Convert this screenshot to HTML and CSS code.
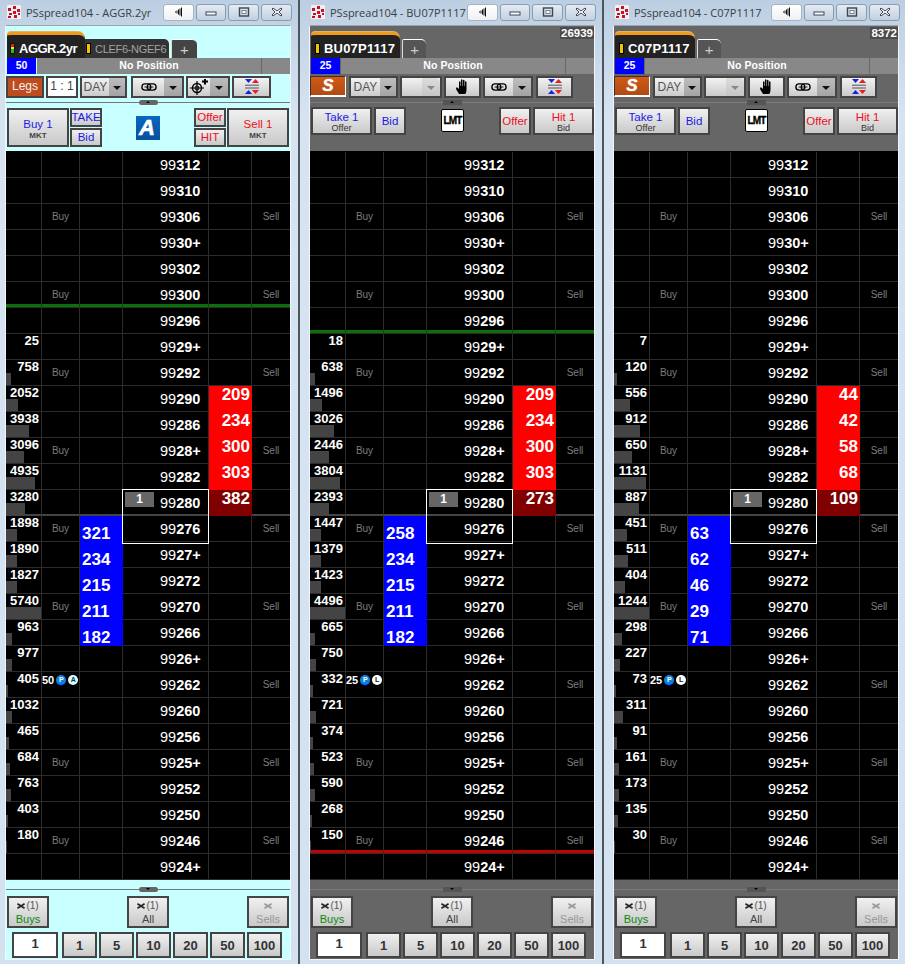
FILE: index.html
```html
<!DOCTYPE html>
<html lang="en">
<head>
<meta charset="utf-8">
<title>PSspread104 ladders</title>
<link rel="stylesheet" href="styles.css">
</head>
<body>
<svg class="defs" aria-hidden="true">
<symbol id="app" viewBox="0 0 14 14"><rect width="14" height="14" fill="#f4eeee"/><path fill="#c4122e" d="M1 3h3v3H1zM6 1h3v3H6zM10 4h3v3h-3zM2 8h3v2H2zM6 6h3v3H6zM1 11h3v2H1zM7 10h3v3H7zM11 8h2v2h-2z"/></symbol>
<symbol id="back" viewBox="0 0 10 10"><path d="M1 4.500h1v1H1zM2.500 3.500h1v3h-1zM4 2.500h1v5H4zM5.500 1.500h1v7h-1zM7 .500h1v9H7z" fill="#111"/></symbol>
<symbol id="min" viewBox="0 0 12 10"><rect x="1" y="5" width="10" height="3" fill="#fff" stroke="#3c4450"/></symbol>
<symbol id="max" viewBox="0 0 12 10"><rect x="1.500" y="1" width="9" height="8" fill="none" stroke="#3c4450" stroke-width="1.400"/><rect x="4" y="3.500" width="4" height="3" fill="#fff" stroke="#3c4450" stroke-width=".6"/></symbol>
<symbol id="close" viewBox="0 0 12 10"><path d="M2 1l4 3 4-3 1 1-3 3 3 3-1 1-4-3-4 3-1-1 3-3-3-3z" fill="#fff" stroke="#3c4450" stroke-width="1"/></symbol>
<symbol id="link" viewBox="0 0 18 9"><rect x="1" y="1" width="10" height="7" rx="3.500" fill="none" stroke="#000" stroke-width="1.500"/><rect x="7" y="1" width="10" height="7" rx="3.500" fill="none" stroke="#000" stroke-width="1.500"/><path d="M4 4.500h10" stroke="#000"/></symbol>
<symbol id="aim" viewBox="0 0 18 16"><circle cx="7" cy="9" r="4.500" fill="none" stroke="#000" stroke-width="1.400"/><circle cx="7" cy="9" r="2" fill="none" stroke="#000"/><path d="M7 2v14M0 9h14" stroke="#000" stroke-width="1.200"/><path d="M12 2.500h6M15 0v5.500" stroke="#000" stroke-width="2"/></symbol>
<symbol id="flat" viewBox="0 0 16 16"><path d="M1 0h7L4.500 4zM1 15l3.500-4L8 15z" fill="#1a22d8"/><path d="M8 4l3.500-4L15 4zM8 11h7l-3.500 4z" fill="#ea1c24"/><path d="M1 6.200h14M1 9h14" stroke="#555" stroke-width="1"/></symbol>
<symbol id="hand" viewBox="0 0 14 16"><path d="M3 15c-1-2-3-4-3-6 1-1 2 0 3 1V3c0-1 1.500-1 1.500 0v4h.5V1c0-1 1.500-1 1.500 0v6h.5V1.500c0-1 1.500-1 1.500 0V7h.5V3c0-1 1.500-1 1.500 0v8c0 2-1 3-1 4z" fill="#000"/></symbol>
<symbol id="x" viewBox="0 0 9 6"><path d="M.5.500l8 5M.5 5.500l8-5" stroke="currentColor" stroke-width="1.800" fill="none"/></symbol>
</svg>
<main class="desk">

<section class="win">
<header class="cap"><svg class="appi"><use href="#app"/></svg><span class="ttl">PSspread104 - AGGR.2yr</span><span class="cbtn back"><svg class="g"><use href="#back"/></svg></span><span class="cbtn w29"><svg class="g"><use href="#min"/></svg></span><span class="cbtn w30"><svg class="g"><use href="#max"/></svg></span><span class="cbtn w31"><svg class="g"><use href="#close"/></svg></span></header>
<div class="panel cy">
<div class="tabs"><div class="tab on tight"><span class="lamp"></span>AGGR.2yr</div><div class="tab off"><span class="bar"></span>CLEF6-NGEF6</div><div class="tab plus">+</div></div>
<div class="status"><span class="qty">50</span><span class="pos">No Position</span><span class="posr"></span></div>
<div class="tools">
<span class="tool legs">Legs</span><span class="tool ratio">1 : 1</span>
<span class="tool w47"><span class="lbl">DAY</span><span class="drop"></span></span>
<span class="tool w53 ml2"><span class="lbl"><svg class="ic18"><use href="#link"/></svg></span><span class="drop d18"></span></span>
<span class="tool w44"><span class="lbl"><svg class="ic16"><use href="#aim"/></svg></span><span class="drop d18"></span></span>
<span class="tool w39"><span class="lbl"><svg class="icf"><use href="#flat"/></svg></span></span>
</div>
<div class="split"><span class="grip"></span></div>
<div class="orders o1">
<div class="grp"><span class="btn big"><span class="bl">Buy 1</span><small>MKT</small></span><span class="stack"><span class="btn sm bl">TAKE</span><span class="btn sm bl">Bid</span></span></div>
<span class="alogo">A</span>
<div class="grp"><span class="stack"><span class="btn sm rd">Offer</span><span class="btn sm rd">HIT</span></span><span class="btn big"><span class="rd">Sell 1</span><small>MKT</small></span></div>
</div>
<div class="ladder">
<div class="r"><i></i><i></i><i></i><i class="p">99<b>312</b></i><i></i><i></i></div>
<div class="r"><i></i><i></i><i></i><i class="p">99<b>310</b></i><i></i><i></i></div>
<div class="r"><i></i><i class="a">Buy</i><i></i><i class="p">99<b>306</b></i><i></i><i class="a">Sell</i></div>
<div class="r"><i></i><i></i><i></i><i class="p">99<b>30+</b></i><i></i><i></i></div>
<div class="r"><i></i><i></i><i></i><i class="p">99<b>302</b></i><i></i><i></i></div>
<div class="r gl"><i></i><i class="a">Buy</i><i></i><i class="p">99<b>300</b></i><i></i><i class="a">Sell</i></div>
<div class="r"><i></i><i></i><i></i><i class="p">99<b>296</b></i><i></i><i></i></div>
<div class="r"><i class="v">25</i><i></i><i></i><i class="p">99<b>29+</b></i><i></i><i></i></div>
<div class="r"><i class="v"><em style="width:5px"></em>758</i><i class="a">Buy</i><i></i><i class="p">99<b>292</b></i><i></i><i class="a">Sell</i></div>
<div class="r"><i class="v"><em style="width:12px"></em>2052</i><i></i><i></i><i class="p">99<b>290</b></i><i class="k">209</i><i></i></div>
<div class="r"><i class="v"><em style="width:23px"></em>3938</i><i></i><i></i><i class="p">99<b>286</b></i><i class="k">234</i><i></i></div>
<div class="r"><i class="v"><em style="width:18px"></em>3096</i><i class="a">Buy</i><i></i><i class="p">99<b>28+</b></i><i class="k">300</i><i class="a">Sell</i></div>
<div class="r"><i class="v"><em style="width:29px"></em>4935</i><i></i><i></i><i class="p">99<b>282</b></i><i class="k">303</i><i></i></div>
<div class="r in"><i class="v"><em style="width:19px"></em>3280</i><i></i><i></i><i class="p sel"><span class="chip">1</span>99<b>280</b></i><i class="k dk">382</i><i></i></div>
<div class="r"><i class="v"><em style="width:11px"></em>1898</i><i class="a">Buy</i><i class="n">321</i><i class="p">99<b>276</b></i><i></i><i class="a">Sell</i></div>
<div class="r"><i class="v"><em style="width:11px"></em>1890</i><i></i><i class="n">234</i><i class="p">99<b>27+</b></i><i></i><i></i></div>
<div class="r"><i class="v"><em style="width:11px"></em>1827</i><i></i><i class="n">215</i><i class="p">99<b>272</b></i><i></i><i></i></div>
<div class="r"><i class="v"><em style="width:35px"></em>5740</i><i class="a">Buy</i><i class="n">211</i><i class="p">99<b>270</b></i><i></i><i class="a">Sell</i></div>
<div class="r"><i class="v"><em style="width:6px"></em>963</i><i></i><i class="n">182</i><i class="p">99<b>266</b></i><i></i><i></i></div>
<div class="r"><i class="v"><em style="width:6px"></em>977</i><i></i><i></i><i class="p">99<b>26+</b></i><i></i><i></i></div>
<div class="r"><i class="v"><em style="width:2px"></em>405</i><i class="wk">50<span class="dot pp">P</span><span class="dot aa">A</span></i><i></i><i class="p">99<b>262</b></i><i></i><i class="a">Sell</i></div>
<div class="r"><i class="v"><em style="width:6px"></em>1032</i><i></i><i></i><i class="p">99<b>260</b></i><i></i><i></i></div>
<div class="r"><i class="v"><em style="width:3px"></em>465</i><i></i><i></i><i class="p">99<b>256</b></i><i></i><i></i></div>
<div class="r"><i class="v"><em style="width:4px"></em>684</i><i class="a">Buy</i><i></i><i class="p">99<b>25+</b></i><i></i><i class="a">Sell</i></div>
<div class="r"><i class="v"><em style="width:5px"></em>763</i><i></i><i></i><i class="p">99<b>252</b></i><i></i><i></i></div>
<div class="r"><i class="v"><em style="width:2px"></em>403</i><i></i><i></i><i class="p">99<b>250</b></i><i></i><i></i></div>
<div class="r"><i class="v"><em style="width:1px"></em>180</i><i class="a">Buy</i><i></i><i class="p">99<b>246</b></i><i></i><i class="a">Sell</i></div>
<div class="r"><i></i><i></i><i></i><i class="p">99<b>24+</b></i><i></i><i></i></div>
</div>
<div class="split low"><span class="grip dn"></span></div>
<div class="cancels"><span class="btn cx"><span class="cxt"><svg class="xi"><use href="#x"/></svg>(1)</span><span class="gr">Buys</span></span><span class="btn cx"><span class="cxt"><svg class="xi"><use href="#x"/></svg>(1)</span><span>All</span></span><span class="btn cx dis"><span class="cxt"><svg class="xi"><use href="#x"/></svg></span><span>Sells</span></span></div>
<div class="qtys"><span class="inp">1</span><span class="btn q">1</span><span class="btn q">5</span><span class="btn q">10</span><span class="btn q">20</span><span class="btn q">50</span><span class="btn q">100</span></div>
</div>
</section>

<section class="win">
<header class="cap"><svg class="appi"><use href="#app"/></svg><span class="ttl">PSspread104 - BU07P1117</span><span class="cbtn back"><svg class="g"><use href="#back"/></svg></span><span class="cbtn w29"><svg class="g"><use href="#min"/></svg></span><span class="cbtn w30"><svg class="g"><use href="#max"/></svg></span><span class="cbtn w31"><svg class="g"><use href="#close"/></svg></span></header>
<div class="panel gy">
<div class="tabs"><div class="tab on"><span class="bar"></span>BU07P1117</div><div class="tab plus pl2">+</div><span class="count">26939</span></div>
<div class="status"><span class="qty">25</span><span class="pos">No Position</span><span class="posr"></span></div>
<div class="tools t2">
<span class="tool sbadge">S</span>
<span class="tool w49 ml1"><span class="lbl">DAY</span><span class="drop"></span></span>
<span class="tool w42"><span class="lbl"></span><span class="drop off d18"></span></span>
<span class="tool w37"><span class="lbl"><svg class="ic14"><use href="#hand"/></svg></span></span>
<span class="tool w50"><span class="lbl"><svg class="ic18"><use href="#link"/></svg></span><span class="drop d18"></span></span>
<span class="tool w37 ml1"><span class="lbl"><svg class="icf"><use href="#flat"/></svg></span></span>
</div>
<div class="split dim"><span class="grip"></span></div>
<div class="orders o2">
<div class="grp g2"><span class="btn tk"><span class="bl">Take 1</span><small class="sub">Offer</small></span><span class="btn bo bl">Bid</span></div>
<span class="lmt">LMT</span>
<div class="grp g2"><span class="btn bo rd">Offer</span><span class="btn tk"><span class="rd">Hit 1</span><small class="sub">Bid</small></span></div>
</div>
<div class="ladder">
<div class="r"><i></i><i></i><i></i><i class="p">99<b>312</b></i><i></i><i></i></div>
<div class="r"><i></i><i></i><i></i><i class="p">99<b>310</b></i><i></i><i></i></div>
<div class="r"><i></i><i class="a">Buy</i><i></i><i class="p">99<b>306</b></i><i></i><i class="a">Sell</i></div>
<div class="r"><i></i><i></i><i></i><i class="p">99<b>30+</b></i><i></i><i></i></div>
<div class="r"><i></i><i></i><i></i><i class="p">99<b>302</b></i><i></i><i></i></div>
<div class="r"><i></i><i class="a">Buy</i><i></i><i class="p">99<b>300</b></i><i></i><i class="a">Sell</i></div>
<div class="r gl"><i></i><i></i><i></i><i class="p">99<b>296</b></i><i></i><i></i></div>
<div class="r"><i class="v">18</i><i></i><i></i><i class="p">99<b>29+</b></i><i></i><i></i></div>
<div class="r"><i class="v"><em style="width:5px"></em>638</i><i class="a">Buy</i><i></i><i class="p">99<b>292</b></i><i></i><i class="a">Sell</i></div>
<div class="r"><i class="v"><em style="width:12px"></em>1496</i><i></i><i></i><i class="p">99<b>290</b></i><i class="k">209</i><i></i></div>
<div class="r"><i class="v"><em style="width:24px"></em>3026</i><i></i><i></i><i class="p">99<b>286</b></i><i class="k">234</i><i></i></div>
<div class="r"><i class="v"><em style="width:19px"></em>2446</i><i class="a">Buy</i><i></i><i class="p">99<b>28+</b></i><i class="k">300</i><i class="a">Sell</i></div>
<div class="r"><i class="v"><em style="width:30px"></em>3804</i><i></i><i></i><i class="p">99<b>282</b></i><i class="k">303</i><i></i></div>
<div class="r in"><i class="v"><em style="width:19px"></em>2393</i><i></i><i></i><i class="p sel"><span class="chip">1</span>99<b>280</b></i><i class="k dk">273</i><i></i></div>
<div class="r"><i class="v"><em style="width:11px"></em>1447</i><i class="a">Buy</i><i class="n">258</i><i class="p">99<b>276</b></i><i></i><i class="a">Sell</i></div>
<div class="r"><i class="v"><em style="width:11px"></em>1379</i><i></i><i class="n">234</i><i class="p">99<b>27+</b></i><i></i><i></i></div>
<div class="r"><i class="v"><em style="width:11px"></em>1423</i><i></i><i class="n">215</i><i class="p">99<b>272</b></i><i></i><i></i></div>
<div class="r"><i class="v"><em style="width:35px"></em>4496</i><i class="a">Buy</i><i class="n">211</i><i class="p">99<b>270</b></i><i></i><i class="a">Sell</i></div>
<div class="r"><i class="v"><em style="width:5px"></em>665</i><i></i><i class="n">182</i><i class="p">99<b>266</b></i><i></i><i></i></div>
<div class="r"><i class="v"><em style="width:6px"></em>750</i><i></i><i></i><i class="p">99<b>26+</b></i><i></i><i></i></div>
<div class="r"><i class="v"><em style="width:3px"></em>332</i><i class="wk">25<span class="dot pp">P</span><span class="dot ll">L</span></i><i></i><i class="p">99<b>262</b></i><i></i><i class="a">Sell</i></div>
<div class="r"><i class="v"><em style="width:6px"></em>721</i><i></i><i></i><i class="p">99<b>260</b></i><i></i><i></i></div>
<div class="r"><i class="v"><em style="width:3px"></em>374</i><i></i><i></i><i class="p">99<b>256</b></i><i></i><i></i></div>
<div class="r"><i class="v"><em style="width:4px"></em>523</i><i class="a">Buy</i><i></i><i class="p">99<b>25+</b></i><i></i><i class="a">Sell</i></div>
<div class="r"><i class="v"><em style="width:5px"></em>590</i><i></i><i></i><i class="p">99<b>252</b></i><i></i><i></i></div>
<div class="r"><i class="v"><em style="width:2px"></em>268</i><i></i><i></i><i class="p">99<b>250</b></i><i></i><i></i></div>
<div class="r rl"><i class="v"><em style="width:1px"></em>150</i><i class="a">Buy</i><i></i><i class="p">99<b>246</b></i><i></i><i class="a">Sell</i></div>
<div class="r"><i></i><i></i><i></i><i class="p">99<b>24+</b></i><i></i><i></i></div>
</div>
<div class="split low dim"><span class="grip dn"></span></div>
<div class="cancels"><span class="btn cx"><span class="cxt"><svg class="xi"><use href="#x"/></svg>(1)</span><span class="gr">Buys</span></span><span class="btn cx"><span class="cxt"><svg class="xi"><use href="#x"/></svg>(1)</span><span>All</span></span><span class="btn cx dis"><span class="cxt"><svg class="xi"><use href="#x"/></svg></span><span>Sells</span></span></div>
<div class="qtys"><span class="inp">1</span><span class="btn q">1</span><span class="btn q">5</span><span class="btn q">10</span><span class="btn q">20</span><span class="btn q">50</span><span class="btn q">100</span></div>
</div>
</section>

<section class="win">
<header class="cap"><svg class="appi"><use href="#app"/></svg><span class="ttl">PSspread104 - C07P1117</span><span class="cbtn back"><svg class="g"><use href="#back"/></svg></span><span class="cbtn w29"><svg class="g"><use href="#min"/></svg></span><span class="cbtn w30"><svg class="g"><use href="#max"/></svg></span><span class="cbtn w31"><svg class="g"><use href="#close"/></svg></span></header>
<div class="panel gy">
<div class="tabs"><div class="tab on"><span class="bar"></span>C07P1117</div><div class="tab plus pl2">+</div><span class="count">8372</span></div>
<div class="status"><span class="qty">25</span><span class="pos">No Position</span><span class="posr"></span></div>
<div class="tools t2">
<span class="tool sbadge">S</span>
<span class="tool w49 ml1"><span class="lbl">DAY</span><span class="drop"></span></span>
<span class="tool w42"><span class="lbl"></span><span class="drop off d18"></span></span>
<span class="tool w37"><span class="lbl"><svg class="ic14"><use href="#hand"/></svg></span></span>
<span class="tool w50"><span class="lbl"><svg class="ic18"><use href="#link"/></svg></span><span class="drop d18"></span></span>
<span class="tool w37 ml1"><span class="lbl"><svg class="icf"><use href="#flat"/></svg></span></span>
</div>
<div class="split dim"><span class="grip"></span></div>
<div class="orders o2">
<div class="grp g2"><span class="btn tk"><span class="bl">Take 1</span><small class="sub">Offer</small></span><span class="btn bo bl">Bid</span></div>
<span class="lmt">LMT</span>
<div class="grp g2"><span class="btn bo rd">Offer</span><span class="btn tk"><span class="rd">Hit 1</span><small class="sub">Bid</small></span></div>
</div>
<div class="ladder">
<div class="r"><i></i><i></i><i></i><i class="p">99<b>312</b></i><i></i><i></i></div>
<div class="r"><i></i><i></i><i></i><i class="p">99<b>310</b></i><i></i><i></i></div>
<div class="r"><i></i><i class="a">Buy</i><i></i><i class="p">99<b>306</b></i><i></i><i class="a">Sell</i></div>
<div class="r"><i></i><i></i><i></i><i class="p">99<b>30+</b></i><i></i><i></i></div>
<div class="r"><i></i><i></i><i></i><i class="p">99<b>302</b></i><i></i><i></i></div>
<div class="r"><i></i><i class="a">Buy</i><i></i><i class="p">99<b>300</b></i><i></i><i class="a">Sell</i></div>
<div class="r"><i></i><i></i><i></i><i class="p">99<b>296</b></i><i></i><i></i></div>
<div class="r"><i class="v">7</i><i></i><i></i><i class="p">99<b>29+</b></i><i></i><i></i></div>
<div class="r"><i class="v"><em style="width:3px"></em>120</i><i class="a">Buy</i><i></i><i class="p">99<b>292</b></i><i></i><i class="a">Sell</i></div>
<div class="r"><i class="v"><em style="width:16px"></em>556</i><i></i><i></i><i class="p">99<b>290</b></i><i class="k">44</i><i></i></div>
<div class="r"><i class="v"><em style="width:26px"></em>912</i><i></i><i></i><i class="p">99<b>286</b></i><i class="k">42</i><i></i></div>
<div class="r"><i class="v"><em style="width:18px"></em>650</i><i class="a">Buy</i><i></i><i class="p">99<b>28+</b></i><i class="k">58</i><i class="a">Sell</i></div>
<div class="r"><i class="v"><em style="width:32px"></em>1131</i><i></i><i></i><i class="p">99<b>282</b></i><i class="k">68</i><i></i></div>
<div class="r in"><i class="v"><em style="width:25px"></em>887</i><i></i><i></i><i class="p sel"><span class="chip">1</span>99<b>280</b></i><i class="k dk">109</i><i></i></div>
<div class="r"><i class="v"><em style="width:13px"></em>451</i><i class="a">Buy</i><i class="n">63</i><i class="p">99<b>276</b></i><i></i><i class="a">Sell</i></div>
<div class="r"><i class="v"><em style="width:14px"></em>511</i><i></i><i class="n">62</i><i class="p">99<b>27+</b></i><i></i><i></i></div>
<div class="r"><i class="v"><em style="width:11px"></em>404</i><i></i><i class="n">46</i><i class="p">99<b>272</b></i><i></i><i></i></div>
<div class="r"><i class="v"><em style="width:35px"></em>1244</i><i class="a">Buy</i><i class="n">29</i><i class="p">99<b>270</b></i><i></i><i class="a">Sell</i></div>
<div class="r"><i class="v"><em style="width:8px"></em>298</i><i></i><i class="n">71</i><i class="p">99<b>266</b></i><i></i><i></i></div>
<div class="r"><i class="v"><em style="width:6px"></em>227</i><i></i><i></i><i class="p">99<b>26+</b></i><i></i><i></i></div>
<div class="r"><i class="v"><em style="width:2px"></em>73</i><i class="wk">25<span class="dot pp">P</span><span class="dot ll">L</span></i><i></i><i class="p">99<b>262</b></i><i></i><i class="a">Sell</i></div>
<div class="r"><i class="v"><em style="width:9px"></em>311</i><i></i><i></i><i class="p">99<b>260</b></i><i></i><i></i></div>
<div class="r"><i class="v"><em style="width:3px"></em>91</i><i></i><i></i><i class="p">99<b>256</b></i><i></i><i></i></div>
<div class="r"><i class="v"><em style="width:5px"></em>161</i><i class="a">Buy</i><i></i><i class="p">99<b>25+</b></i><i></i><i class="a">Sell</i></div>
<div class="r"><i class="v"><em style="width:5px"></em>173</i><i></i><i></i><i class="p">99<b>252</b></i><i></i><i></i></div>
<div class="r"><i class="v"><em style="width:4px"></em>135</i><i></i><i></i><i class="p">99<b>250</b></i><i></i><i></i></div>
<div class="r"><i class="v"><em style="width:1px"></em>30</i><i class="a">Buy</i><i></i><i class="p">99<b>246</b></i><i></i><i class="a">Sell</i></div>
<div class="r"><i></i><i></i><i></i><i class="p">99<b>24+</b></i><i></i><i></i></div>
</div>
<div class="split low dim"><span class="grip dn"></span></div>
<div class="cancels"><span class="btn cx"><span class="cxt"><svg class="xi"><use href="#x"/></svg>(1)</span><span class="gr">Buys</span></span><span class="btn cx"><span class="cxt"><svg class="xi"><use href="#x"/></svg>(1)</span><span>All</span></span><span class="btn cx dis"><span class="cxt"><svg class="xi"><use href="#x"/></svg></span><span>Sells</span></span></div>
<div class="qtys"><span class="inp">1</span><span class="btn q">1</span><span class="btn q">5</span><span class="btn q">10</span><span class="btn q">20</span><span class="btn q">50</span><span class="btn q">100</span></div>
</div>
</section>

</main>
</body>
</html>
```
FILE: styles.css
```css
* { box-sizing: border-box; }
html, body { margin: 0; padding: 0; overflow: hidden; background: #4f555c; }
body { width: 905px; height: 964px; font-family: "Liberation Sans", Arial, sans-serif; font-size: 12px; }
.defs { position: absolute; width: 0; height: 0; }

.desk { display: flex; gap: 2px; margin-left: -4px; width: 910px; height: 964px; }
.win { flex: 0 0 302px; min-width: 0; width: 302px; height: 964px; padding: 0 7px 0 9px; background: linear-gradient(#bccfe2, #d6e4f2 12%, #d3e2f1); }

.cap { display: flex; align-items: center; height: 25px; gap: 2px; padding-bottom: 1px; margin-right: -1px; }
.appi { width: 14px; height: 14px; margin: 0 3px 0 2px; flex: none; }
.ttl { flex: 1; min-width: 0; font-family: "Open Sans", "Noto Sans", sans-serif; font-size: 11px; color: #3a3d41; white-space: nowrap; }
.cbtn { flex: none; height: 17px; display: flex; align-items: center; justify-content: center; border: 1px solid #8c9cb0; border-radius: 3px; background: linear-gradient(#e3ebf4, #c2d0e0); }
.back { width: 31px; background: linear-gradient(#fff, #eef1f5); border-color: #aab4c0; }
.w29 { width: 30px; }
.w30 { width: 31px; }
.w31 { width: 31px; }
.g { width: 12px; height: 10px; }

.panel { height: 935px; border: 1px solid #f2f6fa; border-top-color: #9aa4ae; }
.cy { background: #c8ffff; }
.gy { background: #666; }

.tabs { position: relative; display: flex; align-items: flex-end; height: 32px; padding-left: 1px; }
.tab { display: flex; flex: none; align-items: center; font-weight: bold; white-space: nowrap; }
.on { height: 26px; padding: 4px 5px 0 4px; background: #222; color: #fff; font-size: 13px; letter-spacing: .2px; border-top: 3px solid #f09a20; border-radius: 4px 7px 0 0; box-shadow: 0 -1px 0 #e8b060; }
.tight { width: 78px; padding-left: 3px; letter-spacing: -.5px; }
.off { height: 19px; width: 84px; padding-left: 1px; font-weight: normal; font-size: 11px; letter-spacing: -.3px; color: #a4a4a4; background: #333; border-radius: 0 5px 0 0; }
.plus { justify-content: center; width: 26px; height: 19px; margin-left: 2px; font-weight: normal; font-size: 15px; color: #ccc; background: #444; border-top: 1px solid #fff; border-left: 1px solid #ddd; border-radius: 2px 5px 0 0; }
.pl2 { width: 24px; background: #555; }
.lamp { flex: none; width: 5px; height: 11px; margin-right: 4px; background: linear-gradient(#d22 30%, #ee2 30%, #ee2 60%, #2b2 60%); border: 1px solid #111; }
.bar { flex: none; width: 5px; height: 11px; margin-right: 4px; background: #f5c400; border: 1px solid #000; }
.count { position: absolute; top: 1px; right: 0; padding: 0 1px; background: #4c4c4c; color: #fff; font-weight: bold; font-size: 11.500px; line-height: 12px; }

.status { display: flex; height: 16px; padding-left: 1px; color: #fff; font-weight: bold; font-size: 10.500px; line-height: 15px; }
.qty { width: 29px; background: #00f; text-align: center; margin-right: 1px; }
.pos { flex: 1; background: #888; text-align: center; letter-spacing: .1px; }
.posr { width: 29px; background: #888; border-left: 1px solid #666; }

.tools { display: flex; gap: 2px; margin-top: 2px; height: 22px; }
.tool { display: flex; flex: none; height: 22px; border: 2px solid #444; background: linear-gradient(#f2f2f2, #cbcbcb); color: #555; overflow: hidden; line-height: 17px; }
.lbl { flex: 1; display: flex; align-items: center; justify-content: center; font-size: 12px; }
.drop { position: relative; flex: none; width: 16px; background: linear-gradient(#bdbdbd, #a4a4a4); }
.d18 { width: 18px; }
.drop::after { content: ""; position: absolute; left: 50%; top: 8px; margin-left: -4px; border: 4px solid transparent; border-top: 4px solid #111; border-bottom: 0; }
.drop.off { background: linear-gradient(#ddd, #c4c4c4); }
.drop.off::after { border-top-color: #888; }
.legs { width: 38px; background: #bf4c1c; color: #f2f2f2; justify-content: center; font-size: 12px; }
.ratio { width: 32px; background: #fff; color: #444; justify-content: center; font-size: 12px; border-color: #444; }
.sbadge { width: 36px; height: 21px; background: linear-gradient(#d25a14, #b04a14); color: #fff; justify-content: center; font: italic bold 17px/18px "Liberation Sans", sans-serif; border: 1px solid #333; border-bottom: 2px solid #fff; border-right: 1px solid #fff; text-shadow: 0 0 1px #fff; }
.w37 { width: 37px; }
.w39 { width: 39px; }
.w42 { width: 42px; }
.w44 { width: 44px; }
.w47 { width: 47px; }
.w49 { width: 49px; }
.w50 { width: 50px; }
.w53 { width: 53px; }
.ml1 { margin-left: 1px; }
.ml2 { margin-left: 2px; }
.ic18 { width: 16px; height: 8px; }
.ic16 { width: 18px; height: 16px; }
.ic14 { width: 14px; height: 16px; }
.icf { width: 16px; height: 16px; }

.split { position: relative; height: 9px; display: flex; justify-content: center; }
.split::before { content: ""; position: absolute; left: 0; right: 0; top: 4px; height: 1px; background: #777; }
.dim::before { background: #7c7c7c; }
.grip { position: relative; width: 19px; height: 5px; margin-top: 2px; background: #666; border-radius: 3px; }
.dim .grip { background: #555; border-radius: 0; }
.grip::after { content: ""; position: absolute; left: 7px; top: 1px; border: 2px solid transparent; border-bottom: 2px solid #000; border-top: 0; }
.grip.dn::after { border-bottom: 0; border-top: 2px solid #000; }

.orders { display: flex; justify-content: space-between; align-items: flex-start; height: 44px; padding: 0 0 0 1px; }
.o1 { padding-top: 1px; padding-right: 1px; }
.grp { display: flex; gap: 1px; }
.g2 { gap: 2px; }
.btn { display: flex; flex-direction: column; align-items: center; justify-content: center; flex: none; border: 2px solid #444; background: linear-gradient(#f0f0f0, #c9c9c9); color: #444; font-size: 11.500px; line-height: 13px; }
.big { width: 62px; height: 39px; padding-top: 2px; }
.big small { font-size: 8px; font-weight: bold; color: #444; line-height: 9px; }
.stack { display: flex; flex-direction: column; gap: 1px; }
.sm { width: 32px; height: 19px; }
.tk { width: 61px; height: 28px; padding-top: 1px; }
.bo { width: 32px; height: 28px; }
.sub { font-size: 9px; line-height: 9px; color: #333; }
.bl { color: #1a1ae6; }
.rd { color: #f01020; }
.alogo { width: 24px; height: 24px; margin-top: 8px; background: linear-gradient(#0a66c0, #0850a0); color: #fff; text-align: center; font: italic bold 22px/24px "Liberation Sans", sans-serif; -webkit-text-stroke: .6px #fff; padding-right: 2px; }
.lmt { width: 23px; height: 23px; margin-top: 2px; background: #fff; border: 1px solid #000; border-radius: 2px; color: #000; text-align: center; font-weight: bold; font-size: 10px; line-height: 21px; letter-spacing: -.8px; -webkit-text-stroke: .3px #000; }

.ladder { height: 729px; border-top: 1px solid #000; background: #000; }
.r { display: grid; grid-template-columns: 36px 38px 43px 86px 43px 38px; height: 26px; border-bottom: 1px solid #2c2c2c; }
.r > i { display: block; position: relative; height: 25px; font-style: normal; border-right: 1px solid #2c2c2c; color: #fff; white-space: nowrap; }
.r > i:last-child { border-right: 0; }
.r.gl { box-shadow: inset 0 -3px 0 #0a700a; }
.r.rl { box-shadow: inset 0 -3px 0 #c40000; }
.r.in { border-bottom: 2px solid #444; }
.r > .v { text-align: right; padding-right: 2px; font-weight: bold; font-size: 13px; line-height: 13px; }
.v em { position: absolute; left: 0; top: 13px; height: 12px; background: #444; }
.r > .a { text-align: center; font-size: 10px; line-height: 25px; color: #7c7c7c; }
.r > .p { padding-left: 37px; font-size: 14.500px; line-height: 26px; }
.r > .n { background: #00f; font-weight: bold; font-size: 17px; line-height: 17px; padding: 9px 0 0 2px; border-right: 0; height: 26px; }
.r > .k { background: #f00; font-weight: bold; font-size: 17px; line-height: 17px; text-align: right; padding-right: 2px; height: 26px; border-right: 0; }
.r > .dk { background: #800000; }
.sel::after { content: ""; position: absolute; z-index: 2; left: -1px; right: -1px; top: -1px; height: 53px; border: 1px solid #fff; pointer-events: none; }
.chip { position: absolute; left: 2px; top: 2px; width: 29px; height: 15px; background: #666; color: #fff; font-weight: bold; font-size: 12px; line-height: 15px; text-align: center; }
.r > .wk { display: flex; align-items: flex-start; padding: 3px 0 0 0; font-weight: bold; font-size: 11px; line-height: 11px; gap: 2px; }
.dot { flex: none; width: 10px; height: 10px; border-radius: 50%; text-align: center; font-size: 7px; line-height: 10px; }
.pp { background: #0a84d8; color: #fff; box-shadow: 0 1px 0 #00a; }
.aa { background: #dff; color: #036; }
.ll { background: #fff; color: #024; }

.split.low { height: 16px; }
.low::before { top: 9px; }
.low .grip { margin-top: 7px; }
.cancels { display: flex; justify-content: space-between; padding: 0 1px; }
.cx { width: 42px; height: 32px; font-size: 11px; gap: 1px; line-height: 12px; }
.cxt { display: flex; align-items: center; justify-content: center; gap: 1px; font-size: 10px; height: 12px; color: #555; }
.xi { width: 8px; height: 6px; color: #222; }
.gr { color: #0a8a0a; }
.dis { color: #999; }
.dis .xi { color: #999; }
.qtys { display: flex; gap: 2px; margin-top: 4px; padding-left: 6px; }
.inp { width: 46px; height: 26px; margin-right: 2px; background: #fff; border: 2px solid #444; text-align: center; font-weight: bold; font-size: 13px; line-height: 20px; color: #333; }
.q { width: 35px; height: 26px; font-weight: bold; font-size: 13px; color: #333; }
```
